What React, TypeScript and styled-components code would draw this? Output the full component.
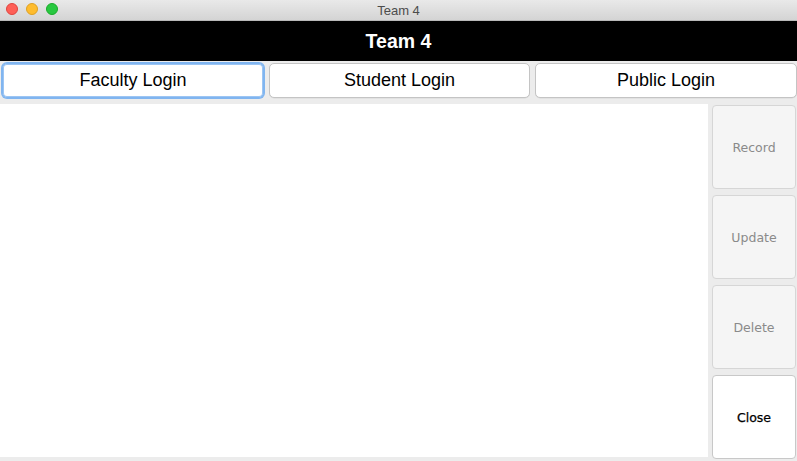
import React from "react";
import styled, { createGlobalStyle } from "styled-components";

const Global = createGlobalStyle`
  html, body { margin: 0; padding: 0; background: #ececec; }
  body { font-family: "Liberation Sans", Arial, sans-serif; }
  * { box-sizing: border-box; }
`;

const Window = styled.div`
  width: 797px;
  height: 461px;
  display: flex;
  flex-direction: column;
  background: #ececec;
  overflow: hidden;
`;

const TitleBar = styled.div`
  position: relative;
  height: 21px;
  flex: none;
  background: linear-gradient(#e9e9e9, #d4d4d4);
  border-bottom: 1px solid #b9b9b9;
  display: flex;
  align-items: center;
  justify-content: center;
  font-family: "Liberation Sans", Arial, sans-serif;
  font-size: 13px;
  color: #4c4c4c;
`;

const Lights = styled.div`
  position: absolute;
  left: 6px;
  top: 3px;
  display: flex;
  gap: 8px;
`;

const Light = styled.span<{ $c: string; $b: string }>`
  width: 12px;
  height: 12px;
  border-radius: 50%;
  background: ${(p) => p.$c};
  border: 0.5px solid ${(p) => p.$b};
`;

const Header = styled.div`
  height: 40px;
  flex: none;
  background: #000;
  color: #fff;
  font-weight: bold;
  font-size: 19.5px;
  display: flex;
  align-items: center;
  justify-content: center;
`;

const LoginRow = styled.div`
  display: grid;
  grid-template-columns: 262px 261px 262px;
  gap: 5px;
  padding: 2px 2px 0 2px;
  flex: none;
`;

const LoginButton = styled.button<{ $focused?: boolean }>`
  height: 35px;
  background: #fff;
  border: 1px solid #c4c4c4;
  border-bottom-color: #b4b4b4;
  border-radius: 5px;
  font-family: "Liberation Sans", Arial, sans-serif;
  font-size: 18px;
  color: #000;
  padding: 0;
  box-shadow: ${(p) =>
    p.$focused ? "0 0 0 1px #80b5f0, inset 0 0 0 1px #9cc5f3" : "0 0.5px 0 rgba(0,0,0,0.08)"};
  border-color: ${(p) => (p.$focused ? "#80b5f0" : "#c4c4c4")};
`;

const Main = styled.div`
  flex: 1;
  display: flex;
  gap: 4px;
  margin-top: 6px;
  min-height: 0;
`;

const Canvas = styled.div`
  width: 708px;
  height: 353px;
  background: #fff;
`;

const SideBar = styled.div`
  display: flex;
  flex-direction: column;
  gap: 6px;
  padding-top: 1px;
`;

const SideButton = styled.button<{ $enabled?: boolean }>`
  width: 84px;
  height: 84px;
  border-radius: 4px;
  border: 1px solid ${(p) => (p.$enabled ? "#c8c8c8" : "#d6d6d6")};
  background: ${(p) => (p.$enabled ? "#fff" : "#f5f5f5")};
  color: ${(p) => (p.$enabled ? "#000" : "#8a8a8a")};
  font-family: "DejaVu Sans", sans-serif;
  font-size: 12.5px;
  font-weight: normal;
  -webkit-text-stroke: ${(p) => (p.$enabled ? "0.25px #000" : "0")};
  padding: 0;
`;

export default function App() {
  return (
    <Window>
      <Global />
      <TitleBar>
        <Lights>
          <Light $c="#fe5f57" $b="#e0443e" />
          <Light $c="#febc2e" $b="#dea123" />
          <Light $c="#28c840" $b="#1aab29" />
        </Lights>
        Team 4
      </TitleBar>
      <Header>Team 4</Header>
      <LoginRow>
        <LoginButton $focused>Faculty Login</LoginButton>
        <LoginButton>Student Login</LoginButton>
        <LoginButton>Public Login</LoginButton>
      </LoginRow>
      <Main>
        <Canvas />
        <SideBar>
          <SideButton>Record</SideButton>
          <SideButton>Update</SideButton>
          <SideButton>Delete</SideButton>
          <SideButton $enabled>Close</SideButton>
        </SideBar>
      </Main>
    </Window>
  );
}
